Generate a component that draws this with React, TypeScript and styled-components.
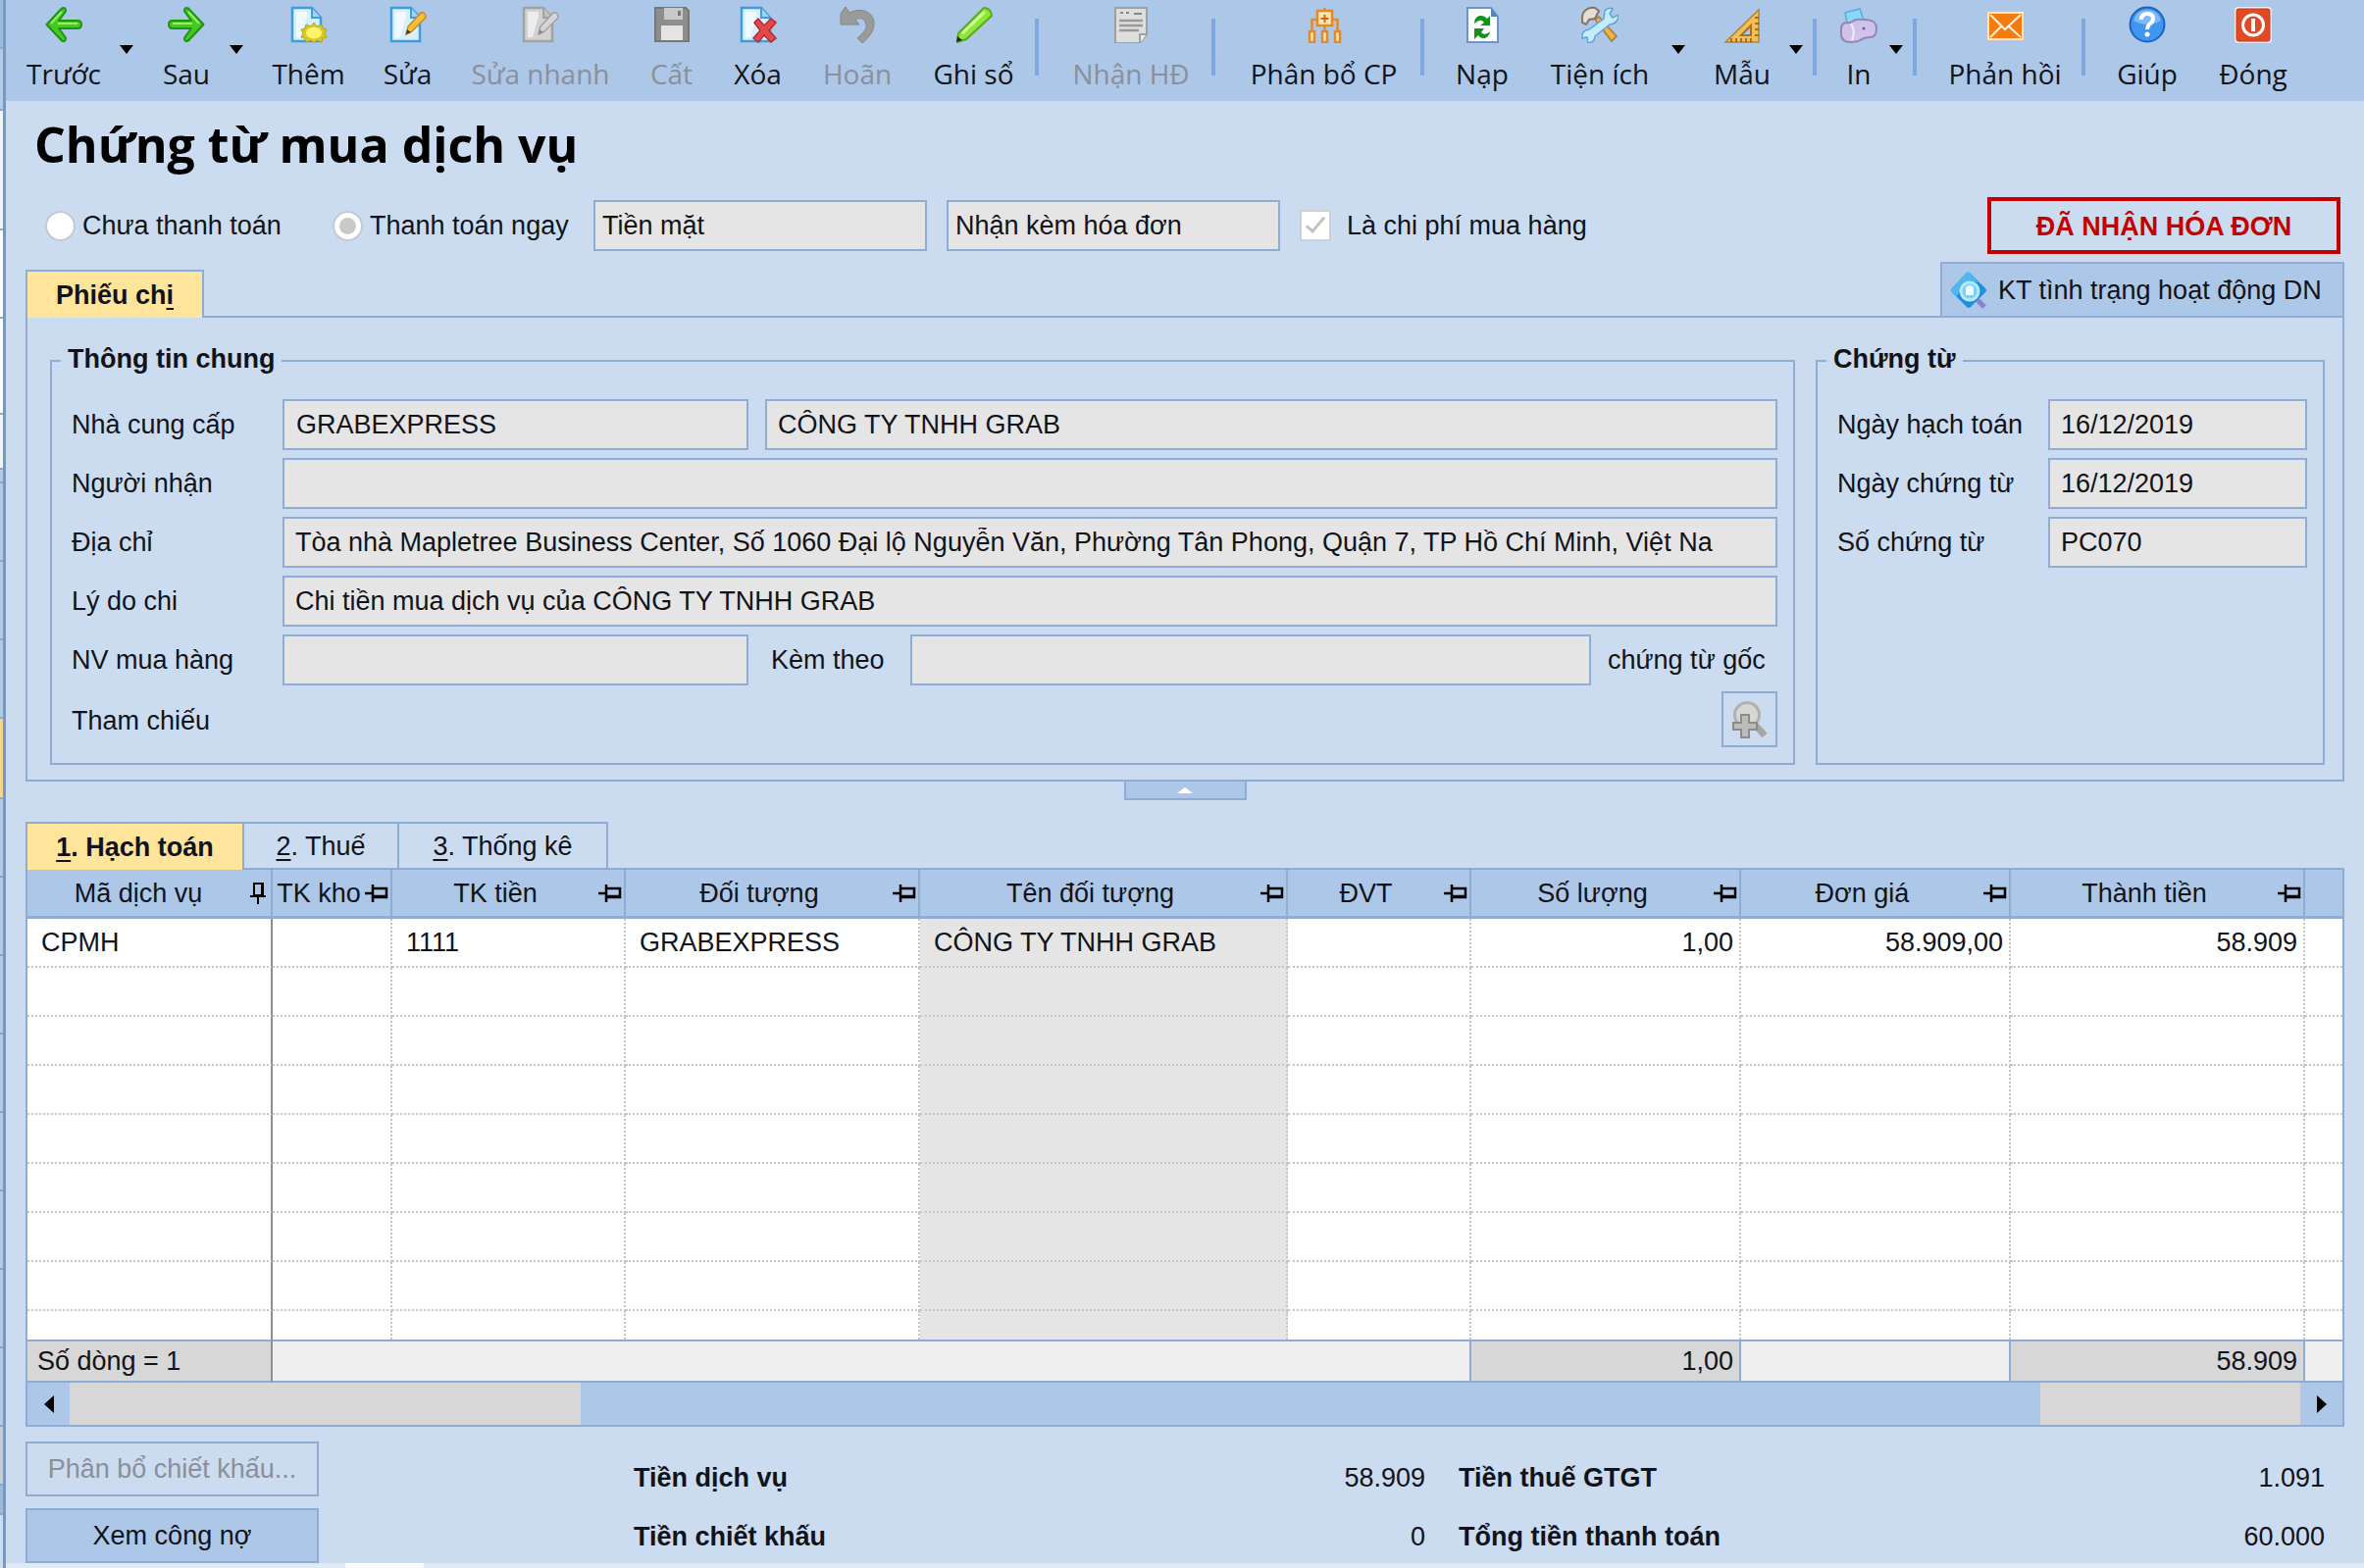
import React from "react";
import styled, { createGlobalStyle } from "styled-components";

const c = {
  bar: "#acc7e7",
  page: "#cbdcf1",
  line: "#8fadd4",
  field: "#e5e5e5",
  active: "#ffe49c",
  text: "#111318",
  muted: "#8b8f99",
  red: "#c30000",
};
const uiFont = '"Liberation Sans", Arial, sans-serif';
const barFont = '"Open Sans", "Noto Sans", sans-serif';

const Global = createGlobalStyle`
  *, *::before, *::after { box-sizing: border-box; }
  body { margin: 0; background: ${c.page}; color: ${c.text}; font: 27px/36px ${uiFont}; }
  button, input, select { font: inherit; color: inherit; margin: 0; border-radius: 0; }
`;

const Shell = styled.div`
  display: flex;
  min-height: 100vh;
`;
const Behind = styled.div`
  display: flex;
  flex-direction: column;
  flex: 0 0 6px;
  border-right: 3px solid #7399c9;
`;
const BehindPart = styled.div<{ $h: number; $bg: string }>`
  flex: 0 1 ${(p) => p.$h}px;
  background: ${(p) => p.$bg};
  border-bottom: 2px solid #8aa9cf;
`;
const Main = styled.main`
  display: flex;
  flex-direction: column;
  flex: 1;
  min-width: 0;
`;

/* toolbar */
const Toolbar = styled.div`
  display: flex;
  height: 103px;
  padding-left: 2px;
  background: ${c.bar};
  font-family: ${barFont};
`;
const ToolButton = styled.button<{ $w: number }>`
  flex: 0 0 ${(p) => p.$w}px;
  display: flex;
  flex-direction: column;
  align-items: center;
  gap: 11px;
  padding: 6px 0 0;
  border: 0;
  background: none;
  font-size: 28px;
  line-height: 40px;
  white-space: nowrap;
  &:disabled { color: ${c.muted}; }
  svg { flex: none; display: block; }
`;
const DropButton = styled.button`
  flex: 0 0 24px;
  align-self: flex-start;
  padding: 46px 10px 0 0;
  border: 0;
  background: none;
  svg { display: block; }
`;
const Divider = styled.span`
  flex: 0 0 4px;
  height: 58px;
  margin: 19px 12px 0 0;
  background: #7fa9dc;
`;

/* heading and options */
const Body = styled.div`
  display: flex;
  flex-direction: column;
  padding: 0 20px;
`;
const Title = styled.h1`
  margin: 0;
  padding: 14px 0 24px 9px;
  font: bold 50px/60px ${barFont};
  color: #000;
`;
const Options = styled.div`
  display: flex;
  align-items: center;
  gap: 20px;
  height: 58px;
  padding: 0 4px 0 20px;
`;
const Radios = styled.div`
  display: flex;
`;
const Option = styled.label<{ $w?: number; $gap: number }>`
  display: flex;
  align-items: center;
  gap: ${(p) => p.$gap}px;
  width: ${(p) => (p.$w ? p.$w + "px" : "auto")};
  white-space: nowrap;
`;
const Radio = styled.input`
  appearance: none;
  flex: none;
  display: grid;
  place-items: center;
  width: 31px;
  height: 31px;
  border: 2px solid #c3c9d2;
  border-radius: 50%;
  background: #fff;
  &:checked::after {
    content: "";
    width: 17px;
    height: 17px;
    border-radius: 50%;
    background: #c9c9c9;
  }
`;
const Check = styled.input`
  appearance: none;
  flex: none;
  display: grid;
  place-items: center;
  width: 32px;
  height: 32px;
  border: 2px solid #cdd0d6;
  background: #fff;
  &:checked::after {
    content: "";
    width: 10px;
    height: 20px;
    border: solid #c2c2c2;
    border-width: 0 3px 3px 0;
    transform: rotate(40deg);
    margin-top: -6px;
  }
`;
const boxCss = `
  height: 52px;
  border: 2px solid ${c.line};
  background: ${c.field};
  outline: none;
  min-width: 0;
`;
const Field = styled.input<{ $w?: number; $pad?: number }>`
  ${boxCss}
  flex: ${(p) => (p.$w ? `0 0 ${p.$w}px` : "1 1 0")};
  padding: 0 ${(p) => p.$pad ?? 11}px;
`;
const Picker = styled.select`
  ${boxCss}
  appearance: none;
  width: 340px;
  padding: 0 7px;
  opacity: 1;
`;
const Badge = styled.strong`
  width: 360px;
  height: 58px;
  margin-left: auto;
  border: 4px solid ${c.red};
  color: ${c.red};
  text-align: center;
  line-height: 52px;
`;

/* tabs */
const TabRow = styled.div<{ $h: number; $top: number }>`
  display: flex;
  align-items: flex-end;
  height: ${(p) => p.$h}px;
  margin-top: ${(p) => p.$top}px;
`;
const Tab = styled.button<{ $w: number; $active?: boolean }>`
  position: relative;
  flex: 0 0 ${(p) => p.$w}px;
  height: ${(p) => (p.$active ? 49 : 47)}px;
  margin-bottom: ${(p) => (p.$active ? -2 : 0)}px;
  padding: 0;
  border: solid ${c.line};
  border-width: 2px 2px 0 ${(p) => (p.$active ? 2 : 0)}px;
  background: ${(p) => (p.$active ? c.active : c.page)};
  font-weight: ${(p) => (p.$active ? 700 : 400)};
  text-underline-offset: 4px;
`;
const StatusButton = styled.button`
  display: flex;
  align-items: center;
  gap: 11px;
  height: 55px;
  width: 412px;
  margin-left: auto;
  padding: 0 0 0 8px;
  border: solid ${c.line};
  border-width: 2px 2px 0;
  background: ${c.bar};
  white-space: nowrap;
`;

/* general information */
const Panel = styled.section`
  display: flex;
  gap: 21px;
  padding: 24px 18px 15px 23px;
  border: 2px solid ${c.line};
`;
const Group = styled.fieldset<{ $w?: number }>`
  flex: ${(p) => (p.$w ? `0 0 ${p.$w}px` : "1 1 0")};
  min-width: 0;
  margin: 0;
  padding: 19px 16px 16px 20px;
  border: 2px solid ${c.line};
`;
const Legend = styled.legend`
  margin-left: -11px;
  padding: 0 7px 4px;
  font-weight: 700;
`;
const Rows = styled.div`
  display: flex;
  flex-direction: column;
  gap: 8px;
`;
const Row = styled.div`
  display: flex;
  align-items: center;
`;
const Label = styled.label<{ $w: number; $pad?: number }>`
  flex: 0 0 ${(p) => p.$w}px;
  padding-left: ${(p) => p.$pad ?? 0}px;
  white-space: nowrap;
`;
const Gap = styled.span`
  flex: 0 0 17px;
`;
const SearchButton = styled.button`
  display: grid;
  place-items: center;
  width: 57px;
  height: 57px;
  margin: -2px 0 0 auto;
  padding: 0;
  border: 2px solid ${c.line};
  background: none;
`;
const Handle = styled.button`
  display: grid;
  place-items: center;
  align-self: center;
  width: 125px;
  height: 19px;
  padding: 0;
  border: 2px solid ${c.line};
  border-top: 0;
  background: ${c.bar};
`;

/* detail grid */
const GridBox = styled.section`
  border: 2px solid ${c.line};
`;
const Table = styled.table`
  width: 100%;
  table-layout: fixed;
  border-spacing: 0;
  background: #fff;
`;
const Th = styled.th`
  height: 50px;
  padding: 0;
  border: solid ${c.line};
  border-width: 0 2px 3px 0;
  background: ${c.bar};
  font-weight: 400;
  white-space: nowrap;
  &:last-child { border-right: 0; }
`;
const HeadCell = styled.div`
  display: flex;
  align-items: center;
  padding-right: 2px;
  svg { flex: none; }
  span { flex: 1; text-align: center; }
`;
const Td = styled.td<{ $right?: boolean; $grey?: boolean; $frozen?: boolean; $short?: boolean }>`
  height: ${(p) => (p.$short ? 29 : 50)}px;
  padding: 0 ${(p) => (p.$right ? 6 : 0)}px 0 ${(p) => (p.$right ? 0 : 14)}px;
  border-right: 2px ${(p) => (p.$frozen ? "solid #8e8e8e" : "dotted #c6c6c6")};
  border-bottom: ${(p) => (p.$short ? "0" : "2px dotted #c6c6c6")};
  background: ${(p) => (p.$grey ? c.field : "#fff")};
  text-align: ${(p) => (p.$right ? "right" : "left")};
  white-space: nowrap;
  &:last-child { border-right: 0; }
`;
const Sum = styled.td<{ $dark?: boolean; $left?: boolean }>`
  height: 44px;
  padding: 0 6px 0 10px;
  border: solid ${c.line};
  border-width: 2px 2px 2px 0;
  background: ${(p) => (p.$dark ? "#d7d7d7" : "#efefef")};
  text-align: ${(p) => (p.$left ? "left" : "right")};
  &:first-child { border-right-color: #8e8e8e; }
  &:last-child { border-right: 0; }
`;
const ScrollBar = styled.div`
  display: flex;
  height: 43px;
  background: #d7d7d7;
`;
const ScrollButton = styled.button`
  display: grid;
  place-items: center;
  flex: 0 0 43px;
  padding: 0;
  border: 0;
  background: ${c.bar};
`;
const Thumb = styled.div`
  flex: 1;
  margin: 0 265px 0 521px;
  background: ${c.bar};
`;

/* footer */
const Footer = styled.footer`
  display: flex;
  margin-top: 15px;
`;
const Actions = styled.div`
  display: flex;
  flex-direction: column;
  gap: 12px;
  flex: 0 0 299px;
`;
const Action = styled.button`
  height: 56px;
  padding: 0;
  border: 2px solid ${c.line};
  background: ${c.bar};
  white-space: nowrap;
  &:disabled { background: ${c.page}; color: ${c.muted}; }
`;
const Totals = styled.dl`
  flex: 1;
  display: grid;
  grid-template-columns: 807fr 883fr;
  gap: 12px 34px;
  margin: 0;
  padding: 13px 20px 3px 321px;
`;
const Total = styled.div`
  display: flex;
  justify-content: space-between;
  line-height: 48px;
  dt { font-weight: 700; }
  dd { margin: 0; }
`;
const Strip = styled.div`
  display: flex;
  flex: 1;
  min-height: 3px;
  padding-left: 346px;
  background: #e0eaf6;
  &::before { content: ""; width: 80px; background: #fafcff; }
`;

/* icons */
const Svg = ({ children, w = 38, h = 38, box = "0 0 38 38" }: any) => (
  <svg width={w} height={h} viewBox={box} fill="none" aria-hidden="true">{children}</svg>
);
const Triangle = () => (
  <Svg w={14} h={9} box="0 0 14 9"><path d="M0 0h14L7 9z" fill="#000" /></Svg>
);
const Arrow = ({ flip }: { flip?: boolean }) => (
  <Svg>
    <g transform={flip ? "translate(38 0) scale(-1 1)" : undefined}>
      <path d="M1.500 19L17 2.500q4-2 4 3l-7 9.500h19q4 0 4 4t-4 4H14l7 9.500q0 5-4 3z" fill="#46c81e" stroke="#1f9414" strokeWidth="2" strokeLinejoin="round" />
      <path d="M6 18L17 6M13 18h20" stroke="#9bec6c" strokeWidth="2" />
    </g>
  </Svg>
);
const Page = ({ grey }: { grey?: boolean }) => (
  <>
    <path d="M2 2h20l9 10v24H2z" fill={grey ? "#d2d2d2" : "#d8effc"} stroke={grey ? "#a2a2a2" : "#3f9ddb"} strokeWidth="2.500" />
    <path d="M22 2v10h9" fill={grey ? "#c2c2c2" : "#9fd4f5"} stroke={grey ? "#a2a2a2" : "#3f9ddb"} strokeWidth="2" />
    <path d="M6 6h11v4l-6 22H6z" fill="#fff" opacity=".6" />
  </>
);
const AddIcon = () => (
  <Svg>
    <Page />
    <path d="M24 17l3 4 5-2 1 4 4 1-2 4 2 4-4 1-1 4-5-2-3 3-3-3-5 2-1-4-4-1 2-4-2-4 4-1 1-4 5 2z" fill="#d9c91f" stroke="#aea520" />
    <ellipse cx="24" cy="27.500" rx="8" ry="6" fill="#fff36b" />
  </Svg>
);
const EditIcon = ({ grey }: { grey?: boolean }) => (
  <Svg>
    <Page grey={grey} />
    <path d="M17 29l2-8L32 7q5-1 5 5L23 26z" fill={grey ? "#d6d6d6" : "#fbc02f"} stroke={grey ? "#a0a0a0" : "#c7862a"} strokeWidth="1.500" />
    <path d="M17 29l1-5 4 3z" fill={grey ? "#888" : "#4a3525"} />
  </Svg>
);
const SaveIcon = () => (
  <Svg>
    <path d="M2 2h31l3 3v31H2z" fill="#8e8e8e" stroke="#777" strokeWidth="2" />
    <path d="M11 2h19v12H11z" fill="#c9c9c9" />
    <path d="M25 5h3v5h-3z" fill="#777" />
    <path d="M8 20h22v15H8z" fill="#e4e4e4" />
  </Svg>
);
const DeleteIcon = () => (
  <Svg>
    <Page />
    <path d="M15 17l4-4 6 7 7-7 5 4-7 8 7 8-5 4-7-7-6 7-5-4 7-8z" fill="#e24a4a" stroke="#b52b35" strokeWidth="1.500" />
  </Svg>
);
const UndoIcon = () => (
  <Svg>
    <path d="M2 19V8l5-7 4 6c12-6 25-1 25 11 0 8-5 14-12 20l-5-5c7-6 10-10 9-14-1-6-7-8-11-5l4 5z" fill="#9a9a9a" stroke="#868686" />
  </Svg>
);
const PenIcon = () => (
  <Svg>
    <path d="M2 37l1-9L29 2q7 0 8 8L11 34z" fill="#8fe63a" stroke="#58ad16" strokeWidth="2" />
    <path d="M7 28L30 6" stroke="#d0fb94" strokeWidth="3" />
    <path d="M1 37l1-6 5 4z" fill="#222" />
  </Svg>
);
const InvoiceIcon = () => (
  <Svg>
    <path d="M3 2h32v27l-7 9H3z" fill="#dedede" stroke="#a0a0a0" strokeWidth="2" />
    <path d="M8 7h3m3 0h3m5 1h8" stroke="#888" strokeWidth="2" />
    <path d="M7 15h24M7 20h24M7 25h20" stroke="#9a9a9a" strokeWidth="2.500" />
    <path d="M28 38v-9h7" fill="#eee" stroke="#a0a0a0" strokeWidth="2" />
  </Svg>
);
const AllocateIcon = () => (
  <Svg>
    <g fill="#ffe5ac" stroke="#df8a2d" strokeWidth="2.500">
      <path d="M12 5h15v15H12zM4 26h5v11H4zM17 26h5v11h-5zM30 26h5v11h-5z" />
      <path d="M19.500 2v3M19.500 20v6M12 14H6.500v12M27 14h5.500v12" fill="none" />
    </g>
    <path d="M19.500 9v8M15.500 13h8" stroke="#c86a14" strokeWidth="2" />
  </Svg>
);
const ReloadIcon = () => (
  <Svg>
    <path d="M4 2h24l7 9v26H4z" fill="#fff" stroke="#6f92cd" strokeWidth="2" />
    <path d="M28 2v9h7z" fill="#5c7fc0" />
    <path d="M11 18c0-9 9-10 13-5l3-3v10H17l4-3c-3-4-6-2-10 1z" fill="#12921a" />
    <path d="M27 26c-1 8-9 9-12 4l-4 4V23h10l-3 4c3 3 6 2 9-1z" fill="#12921a" />
  </Svg>
);
const ToolsIcon = () => (
  <Svg>
    <path d="M14 14l4-3 18 20-5 5z" fill="#eab24f" stroke="#a87b35" strokeWidth="1.500" />
    <path d="M1 12c0-7 6-11 13-10l4 3-4 8-6 1-3 5-4-2z" fill="#e5ddd5" stroke="#85746b" strokeWidth="2" />
    <path d="M24 5q4-4 8-2l-3 5 3 4 6-3q0 9-9 10L14 31q0 6-7 7l-1-6-5 1q-1-8 7-9L23 13z" fill="#c4eafc" stroke="#5aa6dc" strokeWidth="1.500" />
  </Svg>
);
const RulerIcon = () => (
  <Svg>
    <path d="M36 4v33H2z" fill="#f4bd55" stroke="#b9822c" strokeWidth="1.500" />
    <path d="M28 20v10H18z" fill="#acc7e7" stroke="#a4732a" strokeWidth="2" />
    <path d="M8 37v-4M13 37v-4M18 37v-4M23 37v-4M28 37v-4M36 12h-4M36 18h-4M36 24h-4M36 30h-4" stroke="#7e5922" strokeWidth="1.500" />
  </Svg>
);
const PrintIcon = () => (
  <Svg>
    <path d="M5 7l15-4 4 12-17 3z" fill="#8ad8f7" stroke="#56afe0" strokeWidth="1.500" />
    <path d="M1 24q0-7 6-7 3 1 5-1 4-3 10-2 15-1 15 9 0 9-7 9-4 0-8 2-4 3-12 3-8 0-9-7z" fill="#cfc3ea" stroke="#9385b8" strokeWidth="2" />
    <path d="M11 18q5 8 1 17" stroke="#f1ecfb" strokeWidth="2" />
    <circle cx="24" cy="23" r="1.500" fill="#6d5b9a" />
  </Svg>
);
const MailIcon = () => (
  <Svg>
    <path d="M1 6h37v29H1z" fill="#fbe4cc" />
    <path d="M3 8h33v25H3z" fill="#f47b10" />
    <path d="M4 9l15 15L35 9M4 32l11-11M35 32L23 21" stroke="#fff3e2" strokeWidth="2" />
  </Svg>
);
const HelpIcon = () => (
  <Svg>
    <circle cx="19" cy="19" r="17.500" fill="#3f95ef" stroke="#1e63bf" strokeWidth="2" />
    <path d="M5 15Q8 4 19 4t14 11q-14 8-28 0z" fill="#a7d3fb" opacity=".6" />
    <path d="M13 14q0-6 6-6t6 5q0 3-4 6-2 2-2 5" stroke="#fff" strokeWidth="4" />
    <circle cx="19" cy="29" r="2.500" fill="#fff" />
  </Svg>
);
const CloseIcon = () => (
  <Svg>
    <rect x="0" y="1" width="38" height="37" rx="4" fill="#fbe9e2" />
    <rect x="2" y="3" width="34" height="33" rx="2" fill="#e04b26" stroke="#c33c20" />
    <circle cx="19" cy="19.500" r="10.500" stroke="#fff" strokeWidth="3" />
    <path d="M19 13v13" stroke="#fff" strokeWidth="4" />
  </Svg>
);
const LookupIcon = () => (
  <Svg w={38} h={38}>
    <path d="M17 1q2-1 4 1l15 15q2 2 0 4L21 36q-2 2-4 0L2 21q-2-2 0-4z" fill="#1f8fdc" />
    <path d="M17 1q2-1 4 1l8 9Q17 8 7 25l-5-4q-2-2 0-4z" fill="#4fb6f0" />
    <circle cx="20" cy="20" r="9" fill="#7fd0f6" stroke="#b5e8fd" strokeWidth="3" />
    <path d="M16 16q4-4 8 0v8h-8z" fill="#e6faff" />
    <path d="M28 29l7 7" stroke="#8f7fd0" strokeWidth="5" />
  </Svg>
);
const ZoomAddIcon = () => (
  <Svg>
    <circle cx="16" cy="14" r="12.500" fill="#d6d6d4" stroke="#b0b0ae" strokeWidth="3" />
    <path d="M25 25l9 10" stroke="#a6a6a4" strokeWidth="7" />
    <path d="M10 14h8v8h8v7h-8v8h-8v-8H2v-7h8z" fill="#bcbcba" stroke="#8c8c8a" strokeWidth="2" />
  </Svg>
);
const Pin = ({ up }: { up?: boolean }) => (
  <Svg w={up ? 20 : 24} h={24} box={up ? "0 0 20 24" : "0 0 24 24"}>
    {up ? (
      <path d="M5 2h9v12H5zM1 15h16M9 15v8M13 2v12" stroke="#000" strokeWidth="2" />
    ) : (
      <path d="M0 12h8M8 3v18M9 7h13v9H9M9 15h13" stroke="#000" strokeWidth="2.500" />
    )}
  </Svg>
);

type Tool = { label?: string; w?: number; icon?: React.ReactNode; off?: boolean; drop?: boolean };
const tools: Tool[] = [
  { label: "Trước", w: 114, icon: <Arrow />, drop: true },
  { label: "Sau", w: 88, icon: <Arrow flip />, drop: true },
  { label: "Thêm", w: 113, icon: <AddIcon /> },
  { label: "Sửa", w: 89, icon: <EditIcon /> },
  { label: "Sửa nhanh", w: 182, icon: <EditIcon grey />, off: true },
  { label: "Cất", w: 85, icon: <SaveIcon />, off: true },
  { label: "Xóa", w: 91, icon: <DeleteIcon /> },
  { label: "Hoãn", w: 112, icon: <UndoIcon />, off: true },
  { label: "Ghi sổ", w: 125, icon: <PenIcon /> },
  {},
  { label: "Nhận HĐ", w: 164, icon: <InvoiceIcon />, off: true },
  {},
  { label: "Phân bổ CP", w: 197, icon: <AllocateIcon /> },
  {},
  { label: "Nạp", w: 94, icon: <ReloadIcon /> },
  { label: "Tiện ích", w: 146, icon: <ToolsIcon />, drop: true },
  { label: "Mẫu", w: 96, icon: <RulerIcon />, drop: true },
  {},
  { label: "In", w: 62, icon: <PrintIcon />, drop: true },
  {},
  { label: "Phản hồi", w: 156, icon: <MailIcon /> },
  {},
  { label: "Giúp", w: 102, icon: <HelpIcon /> },
  { label: "Đóng", w: 114, icon: <CloseIcon /> },
];

const columns = [
  { title: "Mã dịch vụ", w: 250, value: "CPMH" },
  { title: "TK kho", w: 122, value: "" },
  { title: "TK tiền", w: 238, value: "1111" },
  { title: "Đối tượng", w: 300, value: "GRABEXPRESS" },
  { title: "Tên đối tượng", w: 375, value: "CÔNG TY TNHH GRAB", grey: true },
  { title: "ĐVT", w: 187, value: "" },
  { title: "Số lượng", w: 275, value: "1,00", right: true },
  { title: "Đơn giá", w: 275, value: "58.909,00", right: true },
  { title: "Thành tiền", w: 300, value: "58.909", right: true },
];

const behind: [number, string][] = [
  [50, "#9db9da"], [63, "#b4cae6"], [122, "#f2f5f8"], [90, "#fbfcfd"], [98, "#fbfcfd"], [56, "#f2f5f8"],
  [14, "#b4cae6"], [80, "#b4cae6"], [80, "#b4cae6"], [80, "#b4cae6"], [82, "#f3d68a"],
  [80, "#b4cae6"], [80, "#b4cae6"], [80, "#b4cae6"], [80, "#b4cae6"], [80, "#b4cae6"],
  [80, "#b4cae6"], [80, "#b4cae6"], [80, "#b4cae6"], [60, "#c5cdd6"], [30, "#9db9da"],
];

const totals = [
  ["Tiền dịch vụ", "58.909"],
  ["Tiền thuế GTGT", "1.091"],
  ["Tiền chiết khấu", "0"],
  ["Tổng tiền thanh toán", "60.000"],
];

const TextRow = ({ id, label, value, w, pad }: { id: string; label: string; value: string; w: number; pad?: number }) => (
  <Row>
    <Label $w={w} htmlFor={id}>{label}</Label>
    <Field id={id} $pad={pad} value={value} readOnly />
  </Row>
);

export default function App() {
  return (
    <Shell>
      <Global />
      <Behind>
        {behind.map(([h, bg], i) => <BehindPart key={i} $h={h} $bg={bg} />)}
      </Behind>
      <Main>
        <Toolbar>
          {tools.map((t, i) =>
            t.label ? (
              <React.Fragment key={i}>
                <ToolButton $w={t.w!} disabled={t.off}>{t.icon}{t.label}</ToolButton>
                {t.drop && <DropButton aria-label={t.label}><Triangle /></DropButton>}
              </React.Fragment>
            ) : (
              <Divider key={i} />
            )
          )}
        </Toolbar>

        <Body>
          <Title>Chứng từ mua dịch vụ</Title>
          <Options>
            <Radios>
              <Option $w={293} $gap={7}><Radio type="radio" name="pay" disabled />Chưa thanh toán</Option>
              <Option $w={246} $gap={7}><Radio type="radio" name="pay" defaultChecked disabled />Thanh toán ngay</Option>
            </Radios>
            <Picker aria-label="Thanh toán ngay"><option>Tiền mặt</option></Picker>
            <Picker aria-label="Hóa đơn"><option>Nhận kèm hóa đơn</option></Picker>
            <Option $gap={16}><Check type="checkbox" defaultChecked disabled />Là chi phí mua hàng</Option>
            <Badge>ĐÃ NHẬN HÓA ĐƠN</Badge>
          </Options>

          <TabRow $h={63} $top={0}>
            <Tab $w={182} $active>Phiếu ch<u>i</u></Tab>
            <StatusButton><LookupIcon />KT tình trạng hoạt động DN</StatusButton>
          </TabRow>
          <Panel>
            <Group>
              <Legend>Thông tin chung</Legend>
              <Rows>
                <Row>
                  <Label $w={215} htmlFor="supplier">Nhà cung cấp</Label>
                  <Field id="supplier" $w={475} $pad={12} value="GRABEXPRESS" readOnly />
                  <Gap />
                  <Field aria-label="Tên nhà cung cấp" value="CÔNG TY TNHH GRAB" readOnly />
                </Row>
                <TextRow id="receiver" label="Người nhận" value="" w={215} />
                <TextRow id="address" label="Địa chỉ" value="Tòa nhà Mapletree Business Center, Số 1060 Đại lộ Nguyễn Văn, Phường Tân Phong, Quận 7, TP Hồ Chí Minh, Việt Na" w={215} />
                <TextRow id="reason" label="Lý do chi" value="Chi tiền mua dịch vụ của CÔNG TY TNHH GRAB" w={215} />
                <Row>
                  <Label $w={215} htmlFor="buyer">NV mua hàng</Label>
                  <Field id="buyer" $w={475} value="" readOnly />
                  <Label $w={165} $pad={23} htmlFor="attached">Kèm theo</Label>
                  <Field id="attached" value="" readOnly />
                  <Label $w={190} $pad={17} htmlFor="attached">chứng từ gốc</Label>
                </Row>
                <Row>
                  <span>Tham chiếu</span>
                  <SearchButton aria-label="Tham chiếu"><ZoomAddIcon /></SearchButton>
                </Row>
              </Rows>
            </Group>
            <Group $w={519}>
              <Legend>Chứng từ</Legend>
              <Rows>
                <TextRow id="posted" label="Ngày hạch toán" value="16/12/2019" w={215} />
                <TextRow id="dated" label="Ngày chứng từ" value="16/12/2019" w={215} />
                <TextRow id="number" label="Số chứng từ" value="PC070" w={215} />
              </Rows>
            </Group>
          </Panel>
          <Handle aria-label="Thu gọn">
            <Svg w={16} h={6} box="0 0 16 6"><path d="M8 0l8 6H0z" fill="#fff" /></Svg>
          </Handle>

          <TabRow $h={47} $top={22}>
            <Tab $w={223} $active><u>1</u>. Hạch toán</Tab>
            <Tab $w={158}><u>2</u>. Thuế</Tab>
            <Tab $w={213}><u>3</u>. Thống kê</Tab>
          </TabRow>
          <GridBox>
            <Table>
              <colgroup>
                {columns.map((col) => <col key={col.title} style={{ width: col.w }} />)}
                <col />
              </colgroup>
              <thead>
                <tr>
                  {columns.map((col, i) => (
                    <Th key={col.title}>
                      <HeadCell><span>{col.title}</span><Pin up={i === 0} /></HeadCell>
                    </Th>
                  ))}
                  <Th />
                </tr>
              </thead>
              <tbody>
                {Array.from({ length: 9 }, (_, r) => (
                  <tr key={r}>
                    {columns.map((col, i) => (
                      <Td key={col.title} $right={col.right} $grey={col.grey} $frozen={i === 0} $short={r === 8}>
                        {r === 0 ? col.value : ""}
                      </Td>
                    ))}
                    <Td $short={r === 8} />
                  </tr>
                ))}
              </tbody>
              <tfoot>
                <tr>
                  <Sum $dark $left>Số dòng = 1</Sum>
                  <Sum colSpan={5} />
                  <Sum $dark>1,00</Sum>
                  <Sum />
                  <Sum $dark>58.909</Sum>
                  <Sum />
                </tr>
              </tfoot>
            </Table>
            <ScrollBar>
              <ScrollButton aria-label="Trái">
                <Svg w={10} h={18} box="0 0 10 18"><path d="M10 0v18L0 9z" fill="#000" /></Svg>
              </ScrollButton>
              <Thumb />
              <ScrollButton aria-label="Phải">
                <Svg w={10} h={18} box="0 0 10 18"><path d="M0 0v18l10-9z" fill="#000" /></Svg>
              </ScrollButton>
            </ScrollBar>
          </GridBox>

          <Footer>
            <Actions>
              <Action disabled>Phân bổ chiết khấu...</Action>
              <Action>Xem công nợ</Action>
            </Actions>
            <Totals>
              {totals.map(([name, value]) => (
                <Total key={name}><dt>{name}</dt><dd>{value}</dd></Total>
              ))}
            </Totals>
          </Footer>
        </Body>
        <Strip />
      </Main>
    </Shell>
  );
}
